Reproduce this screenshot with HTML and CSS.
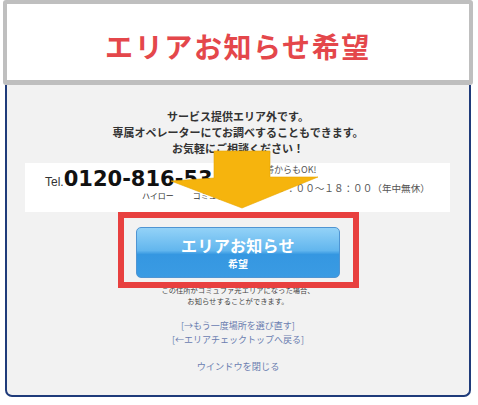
FILE: index.html
```html
<!DOCTYPE html>
<html lang="ja">
<head>
<meta charset="utf-8">
<title>エリアお知らせ希望</title>
<link rel="stylesheet" href="styles.css">
</head>
<body>
<div class="page">
  <header class="head">
    <h1 class="title">エリアお知らせ希望</h1>
  </header>
  <main class="panel">
    <p class="msg">サービス提供エリア外です。<br>専属オペレーターにてお調べすることもできます。<br>お気軽にご相談ください！</p>
    <div class="tel">
      <div class="tel-left">
        <div class="tel-num"><span class="tel-pre">Tel.</span><span class="num">0120-816-532</span></div>
        <div class="tel-yomi"><span>ハイロー</span><span>コミュファ</span></div>
      </div>
      <div class="tel-right">
        <div class="tel-note1">携帯からもOK!</div>
        <div class="tel-note2">受付時間９：００〜１８：００（年中無休）</div>
      </div>
    </div>
    <div class="btn-wrap">
      <a class="btn" href="#"><span class="btn-main">エリアお知らせ</span><span class="btn-sub">希望</span></a>
      <span class="hilite"></span>
    </div>
    <p class="note">この住所がコミュファ光エリアになった場合、<br>お知らせすることができます。</p>
    <p class="links"><a href="#">[→もう一度場所を選び直す]</a><br><a href="#">[←エリアチェックトップへ戻る]</a></p>
    <p class="close"><a href="#">ウインドウを閉じる</a></p>
  </main>
  <svg class="arrow" width="478" height="405" viewBox="0 0 478 405" aria-hidden="true">
    <polygon points="214,151 270,151 270,177 318,177 242,208 171,181 214,178" fill="#f6b40d" stroke="#e8a600" stroke-width="0.6" stroke-linejoin="round"/>
  </svg>
</div>
</body>
</html>
```
FILE: styles.css
```css
* { box-sizing: border-box; }
html, body { margin: 0; padding: 0; background: #ffffff; }
body { font-family: "Noto Sans CJK JP", "Noto Sans", sans-serif; color: #333; }
p { margin: 0; }
a { text-decoration: none; }

.page { position: relative; width: 478px; height: 405px; overflow: hidden; }

.head {
  position: relative;
  z-index: 2;
  margin: 0 5px 0 3px;
  height: 85px;
  border: 4px solid #bfbfbf;
  border-bottom-width: 5px;
  border-radius: 3px;
  background: #fff;
  display: flex;
  align-items: center;
  justify-content: center;
  padding-top: 8px;
}
.title {
  margin: 0;
  font-size: 28px;
  line-height: 32px;
  font-weight: 700;
  letter-spacing: 1.6px;
  color: #e4474b;
}

.panel {
  position: relative;
  z-index: 1;
  margin: 0 7px 0 5px;
  background: #f2f2f2;
  border: 2px solid #1f3b7a;
  border-top: none;
  border-radius: 0 0 7px 7px;
  padding: 23px 0 22px;
  text-align: center;
}

.msg {
  font-size: 11px;
  line-height: 16px;
  font-weight: 700;
  color: #333;
}

.tel {
  margin: 7px 19px 0 18px;
  height: 49px;
  background: #fff;
  display: flex;
  text-align: left;
}
.tel-left {
  width: 213px;
  padding: 5px 0 0 20px;
}
.tel-num { height: 23px; line-height: 23px; white-space: nowrap; }
.tel-pre {
  font-family: "Liberation Sans", Arial, sans-serif;
  font-size: 12px;
  color: #333;
}
.num {
  font-family: "DejaVu Sans", sans-serif;
  font-size: 21px;
  font-weight: 700;
  color: #111;
}
.tel-yomi {
  display: flex;
  gap: 19px;
  padding-left: 97px;
  font-size: 8px;
  line-height: 10px;
  color: #333;
  white-space: nowrap;
}
.tel-right {
  padding-top: 1px;
  white-space: nowrap;
  color: #555;
}
.tel-note1 {
  font-size: 9px;
  line-height: 12px;
  padding-left: 18px;
}
.tel-note2 {
  margin-top: 6px;
  font-size: 9.6px;
  line-height: 12px;
}

.btn-wrap {
  position: relative;
  width: 204px;
  height: 51px;
  margin: 15px auto 0;
}
.btn {
  display: flex;
  flex-direction: column;
  align-items: center;
  width: 100%;
  height: 100%;
  padding-top: 8px;
  border: 1px solid #4f95d3;
  border-radius: 5px;
  background: linear-gradient(#93d2f7 0%, #62b6ee 46%, #3597e1 54%, #3a9be3 100%);
  color: #fff;
  font-weight: 700;
}
.btn-main { font-size: 16px; line-height: 18px; letter-spacing: 0.3px; }
.btn-sub { margin-top: 4px; font-size: 10px; line-height: 12px; }
.hilite {
  position: absolute;
  left: -18px;
  top: -15px;
  width: 241px;
  height: 76px;
  border: 6px solid #e8403f;
}

.note {
  margin-top: 6.5px;
  font-size: 7.3px;
  line-height: 11px;
  color: #444;
}
.links {
  margin-top: 12.5px;
  font-size: 9px;
  line-height: 14px;
}
.links a, .close a { color: #6a7db0; }
.close {
  margin-top: 12px;
  font-size: 9.2px;
  line-height: 14px;
}

.arrow {
  position: absolute;
  left: 0;
  top: 0;
  z-index: 3;
  pointer-events: none;
}
```
